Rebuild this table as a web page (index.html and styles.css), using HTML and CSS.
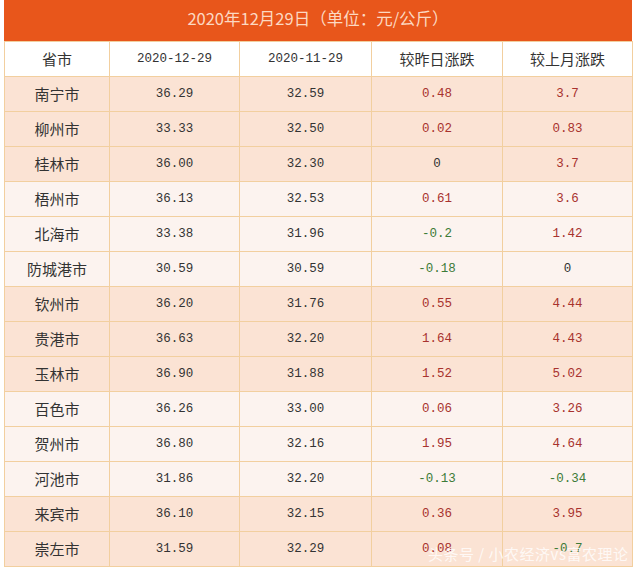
FILE: index.html
```html
<!DOCTYPE html>
<html lang="zh">
<head>
<meta charset="utf-8">
<link rel="stylesheet" href="styles.css">
</head>
<body>
<div class="wrap">
  <div class="title">2020年12月29日（单位：元/公斤）</div>
  <table class="grid">
    <colgroup>
      <col class="c1"><col class="c2"><col class="c3"><col class="c4"><col class="c5">
    </colgroup>
    <thead>
      <tr class="head">
        <th>省市</th><th class="num">2020-12-29</th><th class="num">2020-11-29</th><th>较昨日涨跌</th><th>较上月涨跌</th>
      </tr>
    </thead>
    <tbody>
      <tr class="pk"><td>南宁市</td><td class="num">36.29</td><td class="num">32.59</td><td class="num up">0.48</td><td class="num up">3.7</td></tr>
      <tr class="pk"><td>柳州市</td><td class="num">33.33</td><td class="num">32.50</td><td class="num up">0.02</td><td class="num up">0.83</td></tr>
      <tr class="pk"><td>桂林市</td><td class="num">36.00</td><td class="num">32.30</td><td class="num">0</td><td class="num up">3.7</td></tr>
      <tr class="lt"><td>梧州市</td><td class="num">36.13</td><td class="num">32.53</td><td class="num up">0.61</td><td class="num up">3.6</td></tr>
      <tr class="lt"><td>北海市</td><td class="num">33.38</td><td class="num">31.96</td><td class="num dn">-0.2</td><td class="num up">1.42</td></tr>
      <tr class="lt"><td>防城港市</td><td class="num">30.59</td><td class="num">30.59</td><td class="num dn">-0.18</td><td class="num">0</td></tr>
      <tr class="pk"><td>钦州市</td><td class="num">36.20</td><td class="num">31.76</td><td class="num up">0.55</td><td class="num up">4.44</td></tr>
      <tr class="pk"><td>贵港市</td><td class="num">36.63</td><td class="num">32.20</td><td class="num up">1.64</td><td class="num up">4.43</td></tr>
      <tr class="pk"><td>玉林市</td><td class="num">36.90</td><td class="num">31.88</td><td class="num up">1.52</td><td class="num up">5.02</td></tr>
      <tr class="lt"><td>百色市</td><td class="num">36.26</td><td class="num">33.00</td><td class="num up">0.06</td><td class="num up">3.26</td></tr>
      <tr class="lt"><td>贺州市</td><td class="num">36.80</td><td class="num">32.16</td><td class="num up">1.95</td><td class="num up">4.64</td></tr>
      <tr class="lt"><td>河池市</td><td class="num">31.86</td><td class="num">32.20</td><td class="num dn">-0.13</td><td class="num dn">-0.34</td></tr>
      <tr class="pk"><td>来宾市</td><td class="num">36.10</td><td class="num">32.15</td><td class="num up">0.36</td><td class="num up">3.95</td></tr>
      <tr class="pk"><td>崇左市</td><td class="num">31.59</td><td class="num">32.29</td><td class="num up">0.08</td><td class="num dn">-0.7</td></tr>
    </tbody>
  </table>
  <div class="mark">头条号 / 小农经济vs富农理论</div>
</div>
</body>
</html>
```
FILE: styles.css
```css
html, body {
  margin: 0;
  padding: 0;
  background: #ffffff;
}
body {
  font-family: "Noto Sans CJK SC", "Liberation Sans", sans-serif;
  color: #333333;
}
.wrap {
  position: relative;
  width: 628px;
  margin-left: 4px;
}
.title {
  height: 41px;
  background: #e8561b;
  color: #fcd9c2;
  font-size: 16.5px;
  line-height: 37px;
  text-align: center;
}
.grid {
  width: 628px;
  border-collapse: collapse;
  table-layout: fixed;
}
.c1 { width: 105px; }
.c2 { width: 130px; }
.c3 { width: 132px; }
.c4 { width: 131px; }
.c5 { width: 130px; }
.grid th,
.grid td {
  height: 34px;
  padding: 0;
  border: 1px solid #f2cf9f;
  text-align: center;
  font-weight: normal;
  font-size: 15px;
  line-height: 20px;
}
.grid .num {
  font-family: "Liberation Mono", "DejaVu Sans Mono", monospace;
  font-size: 12.5px;
}
.head { background: #ffffff; }
.pk { background: #fbe3d4; }
.lt { background: #fcf3ef; }
.up { color: #a8322e; }
.dn { color: #3d7b38; }
.mark {
  position: absolute;
  left: 424px;
  top: 543px;
  font-size: 15px;
  color: rgba(255, 255, 255, 0.8);
  letter-spacing: 0.5px;
  white-space: nowrap;
}
```
